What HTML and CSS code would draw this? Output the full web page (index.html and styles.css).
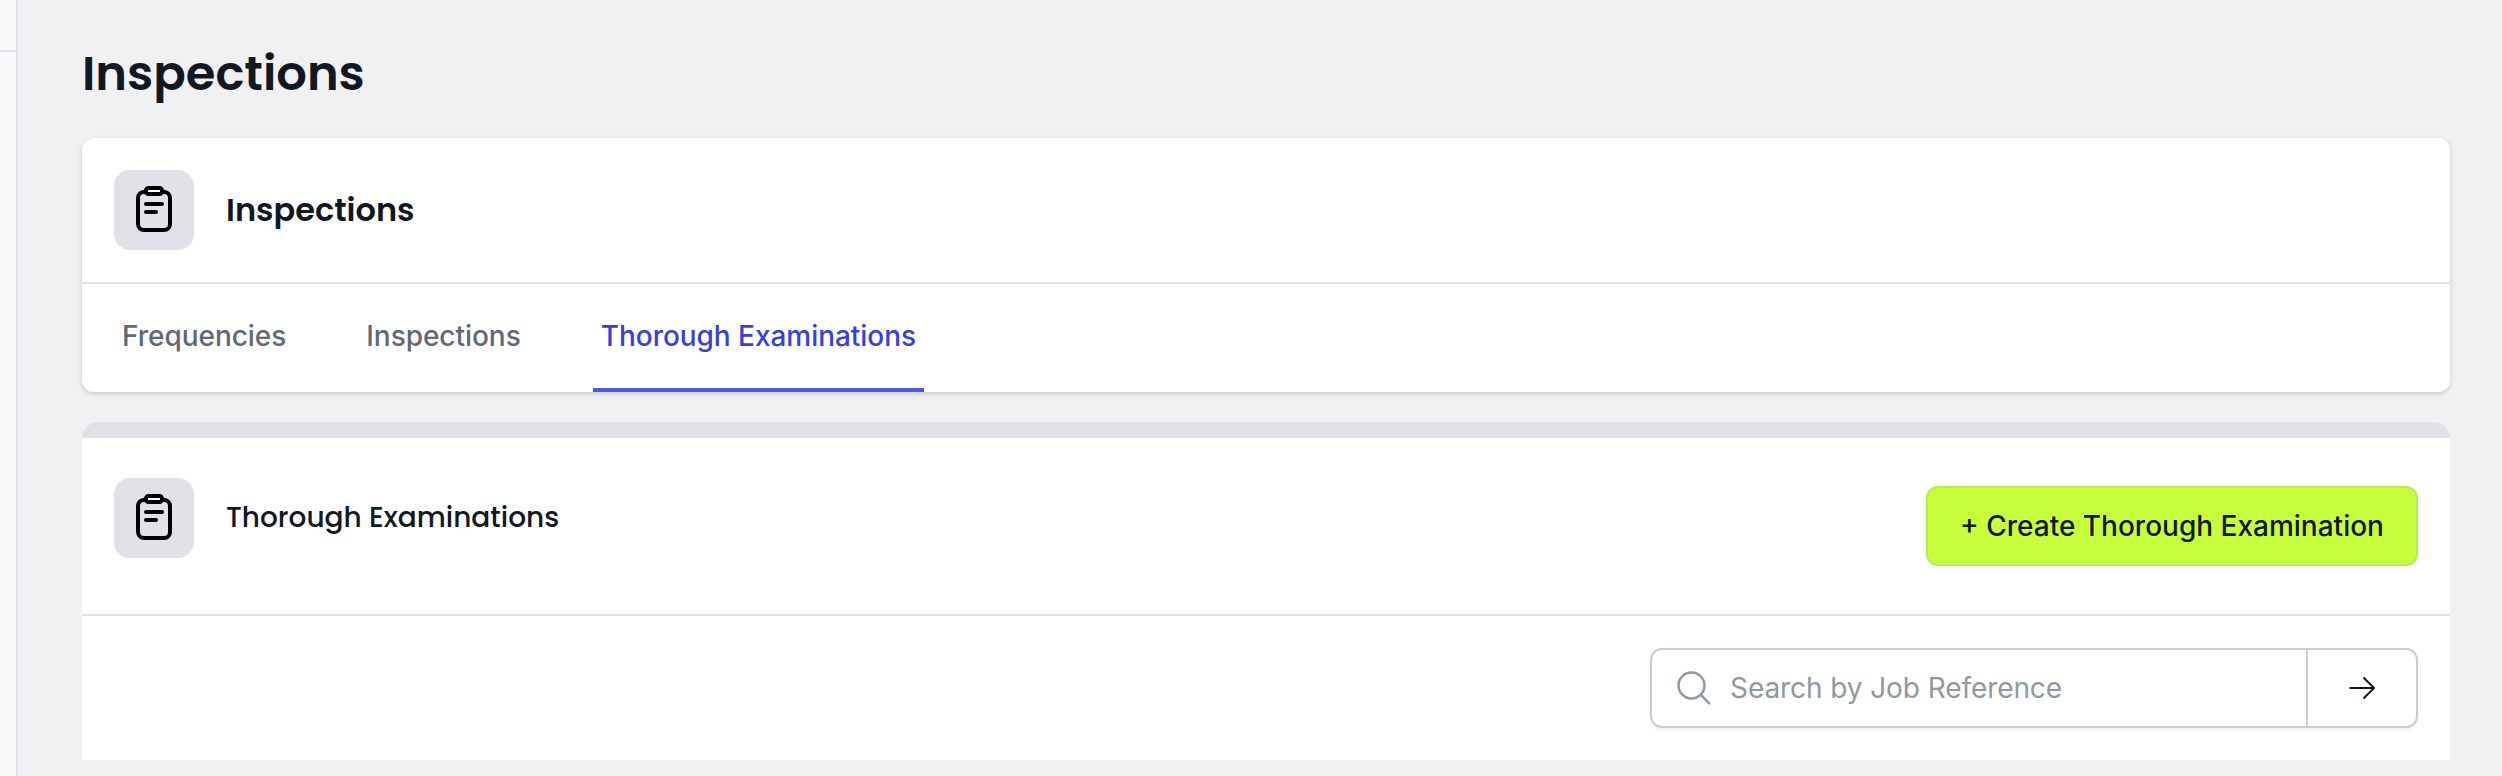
FILE: index.html
```html
<!DOCTYPE html>
<html lang="en">
<head>
<meta charset="utf-8">
<title>Inspections</title>
<link rel="stylesheet" href="styles.css">
</head>
<body>
<svg class="sprite" aria-hidden="true">
  <symbol id="clipboard" viewBox="0 0 24 24">
    <g fill="none" stroke="#000" stroke-width="2" stroke-linecap="round" stroke-linejoin="round">
      <path d="M7.5 3H7a3 3 0 0 0-3 3v13a3 3 0 0 0 3 3h10a3 3 0 0 0 3-3V6a3 3 0 0 0-3-3h-.5M8 9h8M8 13h5"/>
      <rect x="8" y="1" width="8" height="3" rx="1.3" class="clip"/>
    </g>
  </symbol>
</svg>
<div class="app">
  <aside class="sidebar"><div class="sidebar-top"></div></aside>
  <main class="main">
    <h1 class="page-title">Inspections</h1>
    <section class="card">
      <header class="card-head">
        <div class="tile"><svg class="tile-icon"><use href="#clipboard"/></svg></div>
        <h2 class="card-title">Inspections</h2>
      </header>
      <nav class="tabs">
        <a class="tab">Frequencies</a>
        <a class="tab">Inspections</a>
        <a class="tab active">Thorough Examinations</a>
      </nav>
    </section>
    <section class="panel">
      <header class="panel-head">
        <div class="panel-label">
          <div class="tile"><svg class="tile-icon"><use href="#clipboard"/></svg></div>
          <h3 class="panel-title">Thorough Examinations</h3>
        </div>
        <button class="create">+ Create Thorough Examination</button>
      </header>
      <div class="toolbar">
        <div class="search">
          <div class="field">
            <svg class="search-icon" viewBox="0 0 34 34"><circle cx="14.5" cy="14.5" r="13"/><path d="M24 24l8.3 8.3"/></svg>
            <span class="placeholder">Search by Job Reference</span>
          </div>
          <button class="go" aria-label="Search"><svg class="arrow" viewBox="0 0 26 24"><path d="M0.5 12H25M14.5 1.5L25 12 14.5 22.5"/></svg></button>
        </div>
      </div>
    </section>
  </main>
</div>
</body>
</html>
```
FILE: styles.css
```css
* { box-sizing: border-box; }
body { margin: 0; background: #f0f1f3; color: #111824; font-family: Inter, "Liberation Sans", sans-serif; }
h1, h2, h3 { margin: 0; font-family: Poppins, Inter, sans-serif; }
button { font: inherit; color: inherit; padding: 0; }
.sprite { display: none; }
.clip { fill: #fff; }
.app { display: flex; height: 776px; overflow: hidden; }
.sidebar { width: 18px; flex: none; background: #f9fafc; border-right: 2px solid #e1e2e8; }
.sidebar-top { height: 52px; border-bottom: 2px solid #e1e2e8; }
.main { flex: 1; padding: 38px 52px 0 64px; }
.page-title { height: 72px; margin-bottom: 28px; font-size: 48px; line-height: 72px; font-weight: 600; }
.card { height: 254px; margin-bottom: 30px; background: #fff; border-radius: 12px; box-shadow: 0 2px 6px rgba(0,0,0,.1), 0 2px 4px rgba(0,0,0,.06); }
.card-head { display: flex; align-items: center; gap: 32px; height: 146px; padding: 0 32px; border-bottom: 2px solid #e1e2e8; }
.tile { display: flex; align-items: center; justify-content: center; flex: none; width: 80px; height: 80px; border-radius: 16px; background: #e1e2e8; }
.tile-icon { width: 48px; height: 48px; }
.card-title { font-size: 32px; line-height: 48px; font-weight: 600; }
.tabs { display: flex; gap: 64px; height: 108px; padding: 0 32px; }
.tab { padding: 32px 8px 0; font-size: 28px; line-height: 40px; font-weight: 500; letter-spacing: -.04px; color: #5f6876; border-bottom: 4px solid transparent; white-space: nowrap; }
.tab.active { color: #3840dc; border-color: #4c5ae6; }
.panel { height: 338px; background: #fff; border-top: 16px solid #e1e2e8; border-radius: 16px 16px 0 0; }
.panel-head { display: flex; justify-content: space-between; align-items: flex-start; height: 178px; padding: 40px 32px 0; border-bottom: 2px solid #e1e2e8; }
.panel-label { display: flex; align-items: center; gap: 32px; }
.panel-title { font-size: 28px; line-height: 40px; font-weight: 500; }
.create { width: 492px; height: 80px; margin-top: 8px; font-size: 28px; font-weight: 500; background: #c8ff3d; border: 2px solid #bbea58; border-radius: 12px; box-shadow: 0 2px 4px rgba(0,0,0,.06); white-space: nowrap; }
.toolbar { display: flex; justify-content: flex-end; padding: 32px; }
.search { display: flex; width: 768px; height: 80px; border: 2px solid #c9cdd3; border-radius: 12px; box-shadow: 0 2px 4px rgba(0,0,0,.06); }
.field { flex: 1; display: flex; align-items: center; gap: 19px; padding-left: 25px; }
.search-icon { width: 34px; height: 34px; fill: none; stroke: #9098a6; stroke-width: 2.5; stroke-linecap: round; }
.placeholder { font-size: 28px; line-height: 40px; letter-spacing: -.08px; color: #9098a3; }
.go { display: flex; align-items: center; justify-content: center; width: 110px; background: none; border: 0; border-left: 2px solid #c9cdd3; }
.arrow { width: 26px; height: 24px; fill: none; stroke: #111824; stroke-width: 2; }
```
